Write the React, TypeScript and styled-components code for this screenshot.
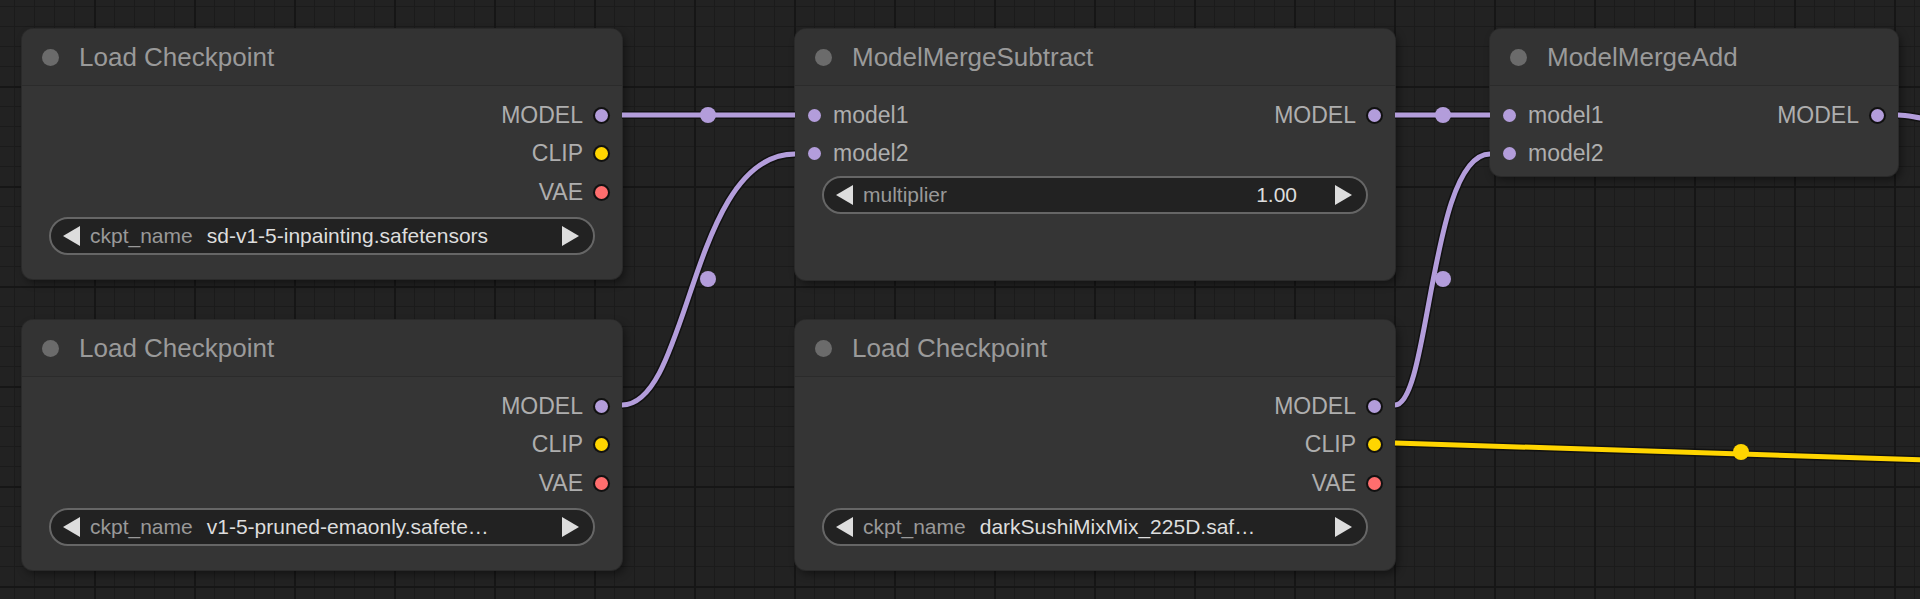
import React from "react";
import styled, { createGlobalStyle } from "styled-components";

const Global = createGlobalStyle`
  html, body { margin: 0; padding: 0; background: #222; }
  body { font-family: "Liberation Sans", Arial, sans-serif; }
`;

const Canvas = styled.div`
  position: relative;
  width: 1920px;
  height: 599px;
  overflow: hidden;
  background-color: #222;
  background-image:
    linear-gradient(#161616 2px, transparent 2px),
    linear-gradient(90deg, #161616 2px, transparent 2px),
    linear-gradient(#1b1b1b 1px, transparent 1px),
    linear-gradient(90deg, #1b1b1b 1px, transparent 1px);
  background-size: 100px 100px, 100px 100px, 20px 20px, 20px 20px;
  background-position: -6px -14px, -6px -14px, -6px -14px, -6px -14px;
`;

const Wires = styled.svg`
  position: absolute;
  left: 0;
  top: 0;
  width: 1920px;
  height: 599px;
  pointer-events: none;
  z-index: 2;
`;

const Node = styled.div<{ $x: number; $y: number; $w: number; $h: number }>`
  position: absolute;
  left: ${(p) => p.$x}px;
  top: ${(p) => p.$y}px;
  width: ${(p) => p.$w}px;
  height: ${(p) => p.$h}px;
  background: #353535;
  border-radius: 11px;
  box-shadow: 0 0 0 1px #2a2a2a, 3px 4px 8px rgba(0, 0, 0, 0.45);
  display: flex;
  flex-direction: column;
  z-index: 1;
`;

const Title = styled.div`
  height: 56px;
  display: flex;
  align-items: center;
  gap: 20px;
  padding-left: 20px;
  background: #333;
  border-bottom: 1px solid #2b2b2b;
  border-radius: 11px 11px 0 0;
  color: #9a9a9a;
  font-size: 26px;
`;

const TitleDot = styled.span`
  width: 17px;
  height: 17px;
  border-radius: 50%;
  background: #6b6b6b;
`;

const Body = styled.div`
  display: flex;
  flex-direction: column;
  padding: 10px 0 0;
`;

const Row = styled.div`
  height: 38.5px;
  display: flex;
  align-items: center;
  justify-content: space-between;
  font-size: 23px;
  color: #aeaeae;
`;

const Slot = styled.div<{ $side: "in" | "out" }>`
  display: flex;
  align-items: center;
  gap: 12px;
  flex-direction: ${(p) => (p.$side === "in" ? "row" : "row-reverse")};
  ${(p) => (p.$side === "in" ? "padding-left: 13px;" : "padding-right: 14px;")}
`;

const Dot = styled.span<{ $c: string; $ring?: boolean }>`
  width: 13px;
  height: 13px;
  border-radius: 50%;
  background: ${(p) => p.$c};
  ${(p) => (p.$ring ? "box-shadow: 0 0 0 2px #111;" : "")}
`;

const Widget = styled.div<{ $mt: number }>`
  margin: ${(p) => p.$mt}px 27px 0 27px;
  height: 38px;
  box-sizing: border-box;
  border: 2px solid #666;
  border-radius: 20px;
  background: #222;
  display: flex;
  align-items: center;
  padding: 0 14px 0 12px;
  font-size: 21px;
  color: #999;
  gap: 10px;
  white-space: nowrap;
`;

const Arrow = styled.span<{ $dir: "l" | "r" }>`
  width: 0;
  height: 0;
  border-top: 10px solid transparent;
  border-bottom: 10px solid transparent;
  ${(p) =>
    p.$dir === "l" ? "border-right: 17px solid #ddd;" : "border-left: 17px solid #ddd;"}
  flex: none;
`;

const WLabel = styled.span`
  color: #999;
`;

const WValue = styled.span<{ $right?: boolean }>`
  color: #ddd;
  flex: 1;
  overflow: hidden;
  padding-left: 4px;
  text-align: ${(p) => (p.$right ? "right" : "left")};
  padding-right: ${(p) => (p.$right ? "28px" : "0")};
`;

const P = "#b39ddb";
const Y = "#ffd500";
const R = "#ff6e6e";

type Out = { name: string; c: string };
const ckptOuts: Out[] = [
  { name: "MODEL", c: P },
  { name: "CLIP", c: Y },
  { name: "VAE", c: R },
];

function LoadCheckpoint({ x, y, value }: { x: number; y: number; value: string }) {
  return (
    <Node $x={x} $y={y} $w={600} $h={250}>
      <Title>
        <TitleDot />
        Load Checkpoint
      </Title>
      <Body>
        {ckptOuts.map((o) => (
          <Row key={o.name}>
            <span />
            <Slot $side="out">
              <Dot $c={o.c} $ring />
              {o.name}
            </Slot>
          </Row>
        ))}
        <Widget $mt={5}>
          <Arrow $dir="l" />
          <WLabel>ckpt_name</WLabel>
          <WValue>{value}</WValue>
          <Arrow $dir="r" />
        </Widget>
      </Body>
    </Node>
  );
}

function MergeNode({
  x,
  w,
  h,
  title,
  widget,
}: {
  x: number;
  w: number;
  h: number;
  title: string;
  widget?: boolean;
}) {
  return (
    <Node $x={x} $y={29} $w={w} $h={h}>
      <Title>
        <TitleDot />
        {title}
      </Title>
      <Body>
        <Row>
          <Slot $side="in">
            <Dot $c={P} />
            model1
          </Slot>
          <Slot $side="out">
            <Dot $c={P} $ring />
            MODEL
          </Slot>
        </Row>
        <Row>
          <Slot $side="in">
            <Dot $c={P} />
            model2
          </Slot>
        </Row>
        {widget && (
          <Widget $mt={3}>
            <Arrow $dir="l" />
            <WLabel>multiplier</WLabel>
            <WValue $right>1.00</WValue>
            <Arrow $dir="r" />
          </Widget>
        )}
      </Body>
    </Node>
  );
}

function Wire({ d, c, mid }: { d: string; c: string; mid: [number, number] }) {
  return (
    <g>
      <path d={d} stroke="#111" strokeWidth={8} fill="none" />
      <path d={d} stroke={c} strokeWidth={5} fill="none" />
      <circle cx={mid[0]} cy={mid[1]} r={8} fill={c} />
    </g>
  );
}

export default function App() {
  return (
    <>
      <Global />
      <Canvas>
        <LoadCheckpoint x={22} y={29} value="sd-v1-5-inpainting.safetensors" />
        <LoadCheckpoint x={22} y={320} value="v1-5-pruned-emaonly.safete…" />
        <MergeNode x={795} w={600} h={251} title="ModelMergeSubtract" widget />
        <LoadCheckpoint x={795} y={320} value="darkSushiMixMix_225D.saf…" />
        <MergeNode x={1490} w={408} h={147} title="ModelMergeAdd" />
        <Wires viewBox="0 0 1920 599">
          <Wire d="M622 115 L795 115" c={P} mid={[708, 115]} />
          <Wire d="M622 405 C 690 405, 690 154, 795 154" c={P} mid={[708, 279]} />
          <Wire d="M1395 115 L1490 115" c={P} mid={[1443, 115]} />
          <Wire d="M1395 405 C 1430 405, 1430 154, 1490 154" c={P} mid={[1443, 279]} />
          <Wire d="M1395 443 L1930 460" c={Y} mid={[1741, 452]} />
          <g>
            <path d="M1898 115 C 1910 115, 1915 118, 1930 119" stroke="#111" strokeWidth={8} fill="none" />
            <path d="M1898 115 C 1910 115, 1915 118, 1930 119" stroke={P} strokeWidth={5} fill="none" />
          </g>
        </Wires>
      </Canvas>
    </>
  );
}
